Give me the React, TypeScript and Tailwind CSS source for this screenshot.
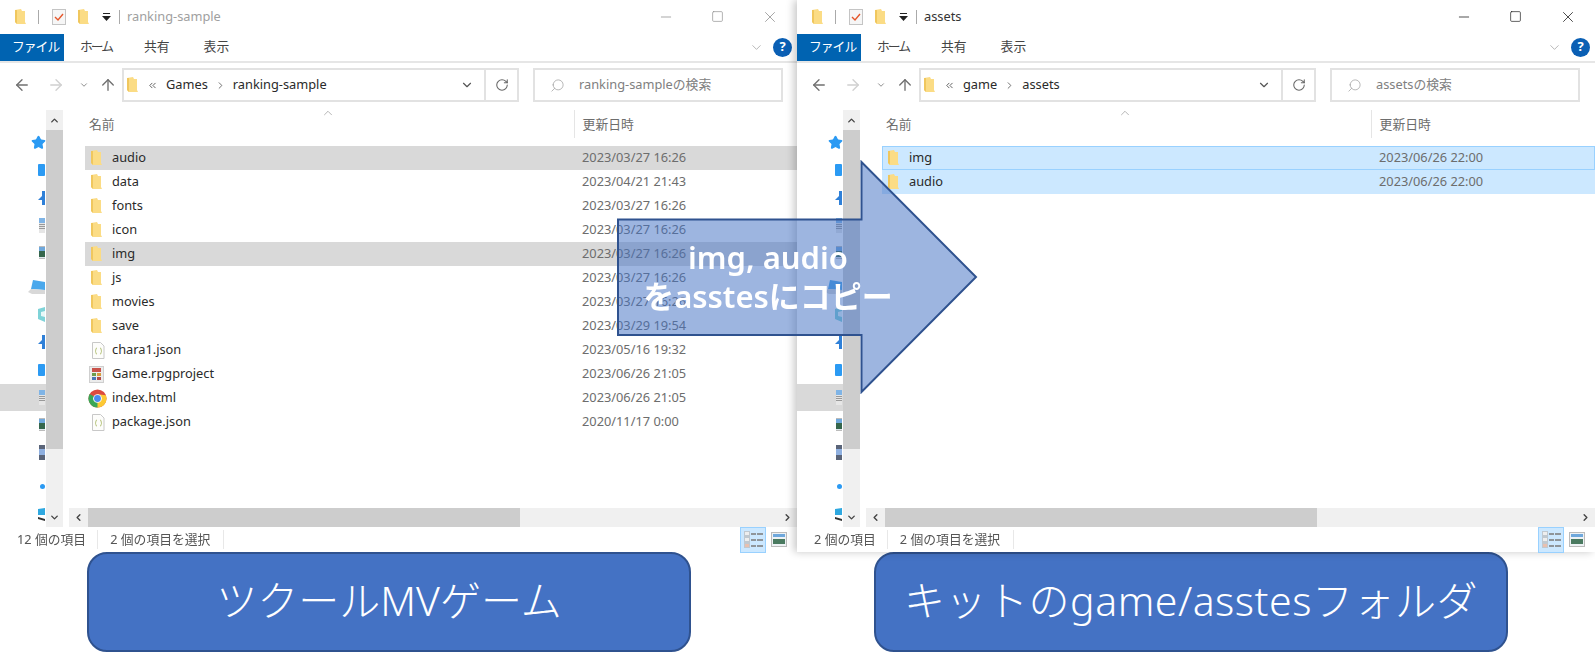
import { ArrowLeft, ArrowRight, ArrowUp, ChevronDown, ChevronLeft, ChevronRight, ChevronUp, ChevronsLeft, Minus, RotateCw, Search, Square, Star, X } from "lucide-react"

type Row = { name: string; date: string; kind: "folder" | "json" | "rpg" | "chrome"; on?: boolean }

const leftRows: Row[] = [
    { name: "audio", date: "2023/03/27 16:26", kind: "folder", on: true },
    { name: "data", date: "2023/04/21 21:43", kind: "folder" },
    { name: "fonts", date: "2023/03/27 16:26", kind: "folder" },
    { name: "icon", date: "2023/03/27 16:26", kind: "folder" },
    { name: "img", date: "2023/03/27 16:26", kind: "folder", on: true },
    { name: "js", date: "2023/03/27 16:26", kind: "folder" },
    { name: "movies", date: "2023/03/27 16:26", kind: "folder" },
    { name: "save", date: "2023/03/29 19:54", kind: "folder" },
    { name: "chara1.json", date: "2023/05/16 19:32", kind: "json" },
    { name: "Game.rpgproject", date: "2023/06/26 21:05", kind: "rpg" },
    { name: "index.html", date: "2023/06/26 21:05", kind: "chrome" },
    { name: "package.json", date: "2020/11/17 0:00", kind: "json" },
]

const rightRows: Row[] = [
    { name: "img", date: "2023/06/26 22:00", kind: "folder", on: true },
    { name: "audio", date: "2023/06/26 22:00", kind: "folder", on: true },
]

const FolderIcon = ({ className = "" }: { className?: string }) => (
    <svg width="11" height="16" viewBox="0 0 11 16" className={className}>
        <path d="M0 1 L6 0 L7 2 L10 2 L10 13 L11 15 L2 15 L0 13 Z" fill="#fbdc85" />
        <path d="M0 1 L2 1 L2 15 L0 13 Z" fill="#f0c75e" />
    </svg>
)

const FileIcon = ({ kind }: { kind: Row["kind"] }) => {
    if (kind === "folder") return <FolderIcon />
    if (kind === "json") {
        return (
            <svg width="14" height="17" viewBox="0 0 14 17" className="ml-[3px] shrink-0">
                <path d="M1.5 .5 H9.5 L13 4 V16.5 H1.5 Z" fill="#fdfdfb" stroke="#c8c8c8" />
                <path d="M6 6 Q4.6 6 4.8 8 Q4.8 9 4 9.2 Q4.8 9.4 4.8 10.4 Q4.6 12 6 12 M9 6 Q10.4 6 10.2 8 Q10.2 9 11 9.2 Q10.2 9.4 10.2 10.4 Q10.4 12 9 12" fill="none" stroke="#b5c27a" />
            </svg>
        )
    }
    if (kind === "rpg") {
        return (
            <svg width="16" height="17" viewBox="0 0 16 17" className="ml-[2px] shrink-0">
                <rect x=".5" y=".5" width="14" height="16" fill="#ececec" stroke="#cfcfcf" />
                <rect x="3" y="2" width="9" height="4" fill="#c9524a" />
                <rect x="3" y="7" width="4" height="3" fill="#6c9b4b" />
                <rect x="8" y="7" width="4" height="3" fill="#d79b3c" />
                <rect x="3" y="11" width="4" height="3" fill="#4a76b5" />
                <rect x="8" y="11" width="4" height="3" fill="#b04a4a" />
            </svg>
        )
    }
    return (
        <svg width="19" height="19" viewBox="0 0 20 20" className="ml-[2px] shrink-0">
            <circle cx="10" cy="10" r="9.5" fill="#dd4b3e" />
            <path d="M10 10 L1.77 5.25 A9.5 9.5 0 0 0 10 19.5 L14.5 11.5 Z" fill="#3aa757" />
            <path d="M10 10 L10 19.5 A9.5 9.5 0 0 0 18.8 6.5 L10 5.5 Z" fill="#fcc934" />
            <circle cx="10" cy="10" r="4.6" fill="#fff" />
            <circle cx="10" cy="10" r="3.6" fill="#4a8bf0" />
        </svg>
    )
}

const navItems = ["star", "folder", "down", "doc", "pic", "pc", "cube", "music", "folder", "doc", "pic", "video", "net", "win"]

const NavIcon = ({ kind }: { kind: string }) => {
    if (kind === "star") return <Star size={15} fill="#2b9af3" stroke="#2b9af3" className="-mr-px" />
    if (kind === "folder") return <div className="w-[7px] h-[12px] rounded-[1px] bg-[#2b9af3]" />
    if (kind === "down" || kind === "music") {
        return (
            <svg width="7" height="14" viewBox="0 0 7 14">
                <path d="M4 0 H7 V14 H4 V9 L0 9 L4 5 Z" fill="#2f80d8" />
            </svg>
        )
    }
    if (kind === "doc") {
        return (
            <div className="flex flex-col w-[6px] h-[15px] bg-[#e6e6e6]">
                <div className="h-[5px] bg-[#7fb4e6]" />
                <div className="mt-px h-px bg-[#999]" />
                <div className="mt-px h-px bg-[#999]" />
                <div className="mt-px h-px bg-[#999]" />
            </div>
        )
    }
    if (kind === "pic") {
        return (
            <div className="flex flex-col w-[6px] h-[13px] bg-[#dfe7ee] border-y border-[#bbb]">
                <div className="h-[4px] bg-[#6fa8dc]" />
                <div className="h-[6px] bg-[#35664c]" />
            </div>
        )
    }
    if (kind === "pc") {
        return (
            <svg width="17" height="16" viewBox="0 0 17 16">
                <path d="M5 1 L17 3 V11 L3 10 Z" fill="#4aa8ec" />
                <path d="M0 13 L3 10 L17 11 V15 L4 15 Z" fill="#d8d8d8" />
            </svg>
        )
    }
    if (kind === "cube") {
        return (
            <svg width="7" height="15" viewBox="0 0 7 15">
                <path d="M0 2 L7 0 V15 L0 12 Z" fill="#7fd3d8" />
                <path d="M3 5 L7 4 V10 L3 9 Z" fill="#e8f8f8" />
            </svg>
        )
    }
    if (kind === "video") {
        return (
            <div className="flex flex-col w-[6px] h-[15px] bg-[#5a6478]">
                <div className="mt-[4px] h-[6px] bg-[#8fb0e0]" />
            </div>
        )
    }
    if (kind === "net") return <div className="w-[5px] h-[5px] rounded-full bg-[#2b9af3]" />
    return (
        <svg width="7" height="13" viewBox="0 0 7 13">
            <path d="M0 1 L7 0 V7 L0 7 Z" fill="#2fa8e0" />
            <path d="M0 9 L7 11 V13 L0 11 Z" fill="#333" />
        </svg>
    )
}

const DetailsIcon = () => (
    <div className="flex w-[26px] h-[26px] items-center justify-center gap-px bg-[#cce8ff] border border-[#99d1ff]">
        <div className="flex flex-col justify-between w-[6px] h-[17px] bg-[#c0c8cf] p-px">
            <div className="h-[3px] bg-[#eee]" />
            <div className="h-[3px] bg-[#eee]" />
            <div className="h-[3px] bg-[#e8c0b0]" />
        </div>
        <div className="grid grid-cols-2 gap-x-px gap-y-[4px] w-[12px]">
            {[0, 1, 2, 3, 4, 5].map((i) => <div key={i} className="h-[2px] bg-[#8f959a]" />)}
        </div>
    </div>
)

const TilesIcon = () => (
    <div className="flex flex-col w-[16px] h-[15px] border border-[#bbb] bg-[#eef2f5] p-px">
        <div className="h-[3px] bg-[#6fa8dc]" />
        <div className="mt-[2px] h-[5px] bg-[#4a7a60]" />
    </div>
)

type WindowProps = {
    title: string
    crumbs: [string, string]
    search: string
    rows: Row[]
    count: string
    active?: boolean
}

const ExplorerWindow = ({ title, crumbs, search, rows, count, active }: WindowProps) => {
    const ctl = active ? "#111" : "#8a8a8a"
    return (
        <div className="flex flex-col w-full h-[552px] bg-white text-[12.8px] text-[#2a2a2a] blur-[0.4px]">
            <div className="flex items-center h-[33px] shrink-0 pl-[15px]">
                <FolderIcon />
                <div className="ml-[12px] w-px h-[14px] bg-[#aaa]" />
                <svg width="14" height="16" viewBox="0 0 14 16" className="ml-[13px]">
                    <rect x=".5" y=".5" width="13" height="15" fill="#f6f6f6" stroke="#c4c4c4" />
                    <path d="M3 8 L6 11 L11 5" fill="none" stroke="#e5562a" strokeWidth="1.4" />
                </svg>
                <FolderIcon className="ml-[12px]" />
                <svg width="9" height="8" viewBox="0 0 9 8" className="ml-[13px]">
                    <rect x="1" y="0" width="7" height="1" fill="#222" />
                    <path d="M0 3 H9 L4.5 8 Z" fill="#222" />
                </svg>
                <div className="ml-[8px] w-px h-[14px] bg-[#aaa]" />
                <span className={active ? "ml-[7px] text-[#333]" : "ml-[7px] text-[#a0a0a0]"}>{title}</span>
                <div className="flex items-center ml-auto">
                    <Minus size={16} stroke={ctl} strokeWidth={1.1} />
                    <Square size={13} stroke={ctl} strokeWidth={1.2} className="ml-[37px]" />
                    <X size={18} stroke={ctl} strokeWidth={1} className="ml-[37px] mr-[18px]" />
                </div>
            </div>

            <div className="flex items-center h-[28px] shrink-0 border-b-2 border-[#e6e6e6] box-content">
                <div className="flex items-center w-[64px] h-[27px] pl-[12px] bg-[#0063b1] text-white whitespace-nowrap tracking-[-1px]">ファイル</div>
                <span className="ml-[16px] text-[#444] tracking-[-2px]">ホーム</span>
                <span className="ml-[32px] text-[#444]">共有</span>
                <span className="ml-[34px] text-[#444]">表示</span>
                <ChevronDown size={15} stroke="#a8a8a8" strokeWidth={1.3} className="ml-auto" />
                <div className="flex items-center justify-center w-[19px] h-[19px] ml-[9px] mr-[5px] rounded-full bg-[#0a5fb4] text-white text-[13px] font-bold">?</div>
            </div>

            <div className="flex items-center h-[44px] shrink-0 pl-[13px]">
                <ArrowLeft size={18} stroke="#707070" strokeWidth={1.8} />
                <ArrowRight size={18} stroke="#d0d0d0" strokeWidth={1.8} className="ml-[16px]" />
                <ChevronDown size={10} stroke="#909090" strokeWidth={2.4} className="ml-[14px]" />
                <ArrowUp size={18} stroke="#707070" strokeWidth={1.8} className="ml-[10px]" />
                <div className="flex items-center w-[397px] h-[34px] ml-[5px] border-2 border-[#e2e2e2] pl-[3px]">
                    <FolderIcon />
                    <ChevronsLeft size={11} stroke="#555" className="ml-[9px]" />
                    <span className="ml-[8px]">{crumbs[0]}</span>
                    <ChevronRight size={11} stroke="#666" className="ml-[7px]" />
                    <span className="ml-[7px]">{crumbs[1]}</span>
                    <ChevronDown size={14} stroke="#555" strokeWidth={2} className="ml-auto mr-[10px]" />
                    <div className="flex items-center justify-center w-[33px] h-full border-l-2 border-[#e2e2e2]">
                        <RotateCw size={14} stroke="#666" strokeWidth={1.8} />
                    </div>
                </div>
                <div className="flex items-center w-[250px] h-[34px] ml-[14px] border-2 border-[#e2e2e2] pl-[15px] text-[#808080]">
                    <Search size={15} stroke="#a0a0a0" strokeWidth={1.2} className="-scale-x-100" />
                    <span className="ml-[14px]">{search}</span>
                </div>
            </div>

            <div className="flex h-[417px] shrink-0 mt-[3px]">
                <div className="flex flex-col items-end w-[46px] shrink-0 overflow-hidden pt-[19px]">
                    {navItems.map((kind, i) => (
                        <div key={i} className={`flex items-center justify-end w-full h-[27.5px] shrink-0 pr-[1px] ${i === 5 || i === 12 ? "mt-[7px]" : ""} ${i === 9 ? "bg-[#d9d9d9]" : ""}`}>
                            <NavIcon kind={kind} />
                        </div>
                    ))}
                </div>
                <div className="flex flex-col items-center w-[17px] shrink-0 bg-[#f0f0f0]">
                    <div className="flex items-center justify-center h-[20px] shrink-0">
                        <ChevronUp size={11} stroke="#444" strokeWidth={3} />
                    </div>
                    <div className="w-full h-[319px] bg-[#cdcdcd]" />
                    <div className="flex items-center justify-center h-[20px] shrink-0 mt-auto">
                        <ChevronDown size={11} stroke="#444" strokeWidth={3} />
                    </div>
                </div>

                <div className="flex flex-col flex-1 min-w-0 ml-[6px]">
                    <div className="flex-1 min-h-0">
                        <div className="flex items-start h-[36px] pt-[5px] text-[#6d6d6d]">
                            <span className="ml-[20px]">名前</span>
                            <ChevronUp size={14} stroke="#a0a0a0" strokeWidth={1.3} className="ml-[206px] -mt-[9px]" />
                            <div className="ml-[239px] w-px h-[28px] -mt-[5px] bg-[#e5e5e5]" />
                            <span className="ml-[8px]">更新日時</span>
                        </div>
                        <div className="ml-[16px]">
                            {rows.map((r, i) => (
                                <div key={r.name} className={`flex items-center h-[24px] ${r.on ? (active ? `bg-[#cce8ff] ${i === 0 ? "outline outline-[#99d1ff] -outline-offset-1" : ""}` : "bg-[#d9d9d9]") : ""}`}>
                                    <div className="flex items-center w-[497px] shrink-0 pl-[3px]">
                                        <div className="flex justify-center w-[16px] h-[20px] items-center shrink-0"><FileIcon kind={r.kind} /></div>
                                        <span className="ml-[8px]">{r.name}</span>
                                    </div>
                                    <span className="text-[#6d6d6d]">{r.date}</span>
                                </div>
                            ))}
                        </div>
                    </div>
                    <div className="flex items-center h-[19px] shrink-0 bg-[#f0f0f0]">
                        <div className="flex items-center justify-center w-[19px]">
                            <ChevronLeft size={11} stroke="#444" strokeWidth={3} />
                        </div>
                        <div className="w-[432px] h-full bg-[#cdcdcd]" />
                        <ChevronRight size={11} stroke="#444" strokeWidth={3} className="ml-auto mr-[4px]" />
                    </div>
                </div>
            </div>

            <div className="flex items-center h-[25px] shrink-0 text-[12.8px] text-[#555]">
                <span className="pl-[17px] pr-[11px] border-r border-[#e8e8e8]">{count}</span>
                <span className="pl-[12px] pr-[13px] border-r border-[#e8e8e8]">2 個の項目を選択</span>
                <div className="flex items-center gap-[5px] ml-auto mr-[10px]">
                    <DetailsIcon />
                    <TilesIcon />
                </div>
            </div>
        </div>
    )
}

const CopyArrow = () => (
    <div className="absolute left-[617px] top-[160px] w-[361px] h-[234px] z-10">
        <svg width="361" height="234" viewBox="0 0 361 234" className="absolute inset-0">
            <path d="M1 59.5 H244.5 V2 L359 117 L244.5 232 V175 H1 Z" fill="#4472c4" fillOpacity="0.52" stroke="#2f528f" strokeWidth="2" />
        </svg>
        <div className="relative flex flex-col items-center justify-center w-[302px] h-full text-white text-[31px] font-semibold leading-[39px] whitespace-nowrap">
            <span>img, audio</span>
            <span>をasstesにコピー</span>
        </div>
    </div>
)

const App = () => {
    return (
        <div className="relative w-[1595px] h-[652px] overflow-hidden bg-white font-['Noto_Sans','Noto_Sans_CJK_JP',sans-serif]">
            <div className="flex">
                <div className="w-[797px] shrink-0">
                    <ExplorerWindow title="ranking-sample" crumbs={["Games", "ranking-sample"]} search="ranking-sampleの検索" rows={leftRows} count="12 個の項目" />
                </div>
                <div className="relative w-[798px] shrink-0 shadow-[-3px_0_8px_rgba(0,0,0,0.22)]">
                    <ExplorerWindow active title="assets" crumbs={["game", "assets"]} search="assetsの検索" rows={rightRows} count="2 個の項目" />
                </div>
            </div>
            <div className="flex h-[100px]">
                <div className="flex items-center justify-center w-[604px] ml-[87px] pb-[2px] rounded-[20px] bg-[#4472c4] border-2 border-[#2f528f] text-white text-[41px] font-light">ツクールMVゲーム</div>
                <div className="flex items-center justify-center w-[634px] ml-[183px] pb-[2px] rounded-[20px] bg-[#4472c4] border-2 border-[#2f528f] text-white text-[41px] font-light tracking-[0.5px]">キットのgame/asstesフォルダ</div>
            </div>
            <CopyArrow />
        </div>
    )
}

export default App
